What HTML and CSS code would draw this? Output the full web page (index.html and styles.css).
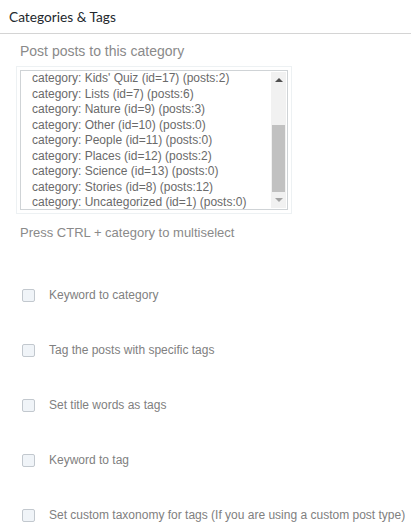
FILE: index.html
```html
<!DOCTYPE html>
<html>
<head>
<meta charset="utf-8">
<link rel="stylesheet" href="styles.css">
</head>
<body>
<div class="panel">
  <div class="panel-head">Categories &amp; Tags</div>
  <div class="panel-body">
    <div class="field-label">Post posts to this category</div>
    <div class="select-ring">
      <div class="select-box">
        <ul class="options">
          <li>category: Kids' Quiz (id=17) (posts:2)</li>
          <li>category: Lists (id=7) (posts:6)</li>
          <li>category: Nature (id=9) (posts:3)</li>
          <li>category: Other (id=10) (posts:0)</li>
          <li>category: People (id=11) (posts:0)</li>
          <li>category: Places (id=12) (posts:2)</li>
          <li>category: Science (id=13) (posts:0)</li>
          <li>category: Stories (id=8) (posts:12)</li>
          <li>category: Uncategorized (id=1) (posts:0)</li>
        </ul>
        <div class="scrollbar">
          <div class="arrow up"></div>
          <div class="track">
            <div class="track-top"></div>
            <div class="thumb"></div>
            <div class="track-bottom"></div>
          </div>
          <div class="arrow down"></div>
        </div>
      </div>
    </div>
    <div class="hint">Press CTRL + category to multiselect</div>

    <div class="checks">
      <label class="check"><span class="box"></span><span>Keyword to category</span></label>
      <label class="check"><span class="box"></span><span>Tag the posts with specific tags</span></label>
      <label class="check"><span class="box"></span><span>Set title words as tags</span></label>
      <label class="check"><span class="box"></span><span>Keyword to tag</span></label>
      <label class="check"><span class="box"></span><span>Set custom taxonomy for tags (If you are using a custom post type)</span></label>
    </div>
  </div>
</div>
</body>
</html>
```

FILE: styles.css
```css
html, body {
  margin: 0;
  padding: 0;
  background: #fff;
}

.panel {
  width: 411px;
  font-family: "Liberation Sans", Arial, sans-serif;
}

.panel-head {
  height: 34px;
  box-sizing: border-box;
  padding: 8px 0 0 9px;
  border-bottom: 1px solid #d4d4d4;
  font-family: Lato, "Open Sans", sans-serif;
  font-size: 13.7px;
  color: #23282d;
  line-height: 18px;
}

.panel-body {
  padding: 8px 0 0 16px;
}

.field-label {
  font-size: 14px;
  color: #8a8a8a;
  line-height: 18px;
  padding-left: 4px;
  margin-bottom: 6px;
}

.select-ring {
  width: 276px;
  height: 148px;
  border: 1px solid #edf1f3;
  padding: 3px;
  box-sizing: border-box;
}

.select-box {
  display: flex;
  height: 140px;
  box-sizing: border-box;
  border: 1px solid #cfd3d6;
  background: #fff;
}

.options {
  flex: 1;
  list-style: none;
  margin: 0;
  padding: 0 0 0 11px;
  overflow: hidden;
  font-size: 12px;
  line-height: 15.5px;
  color: #6a6a6a;
  white-space: nowrap;
}

.scrollbar {
  width: 15px;
  margin: 1px 1px 1px 0;
  background: #f1f1f1;
  display: flex;
  flex-direction: column;
}

.arrow {
  height: 17px;
  display: flex;
  align-items: center;
  justify-content: center;
}

.arrow::before {
  content: "";
  width: 0;
  height: 0;
  border-left: 4px solid transparent;
  border-right: 4px solid transparent;
}

.arrow.up::before {
  border-bottom: 4px solid #505050;
}

.arrow.down::before {
  border-top: 4px solid #a3a3a3;
}

.track {
  flex: 1;
  display: flex;
  flex-direction: column;
  padding: 0 1px;
}

.track-top {
  height: 36px;
}

.thumb {
  height: 67px;
  background: #c1c1c1;
}

.track-bottom {
  flex: 1;
}

.hint {
  font-size: 13px;
  color: #8a8a8a;
  line-height: 18px;
  padding-left: 4px;
  margin-top: 10px;
}

.checks {
  display: flex;
  flex-direction: column;
  gap: 37px;
  margin-top: 44px;
  padding-left: 6px;
}

.check {
  display: flex;
  align-items: center;
  height: 18px;
  font-size: 12px;
  color: #808080;
}

.box {
  width: 11px;
  height: 11px;
  border: 1px solid #c2c8ce;
  border-radius: 2px;
  background: #f0f4f8;
  margin-right: 14px;
  flex: none;
}
```
